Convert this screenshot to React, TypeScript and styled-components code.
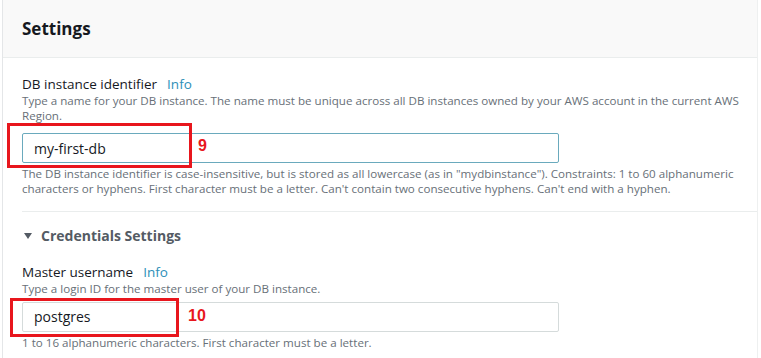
import styled, { createGlobalStyle } from "styled-components";

const GlobalStyle = createGlobalStyle`
    html, body {
        margin: 0;
        padding: 0;
        background: #ffffff;
        font-family: "Open Sans", "Liberation Sans", sans-serif;
        color: #16191f;
    }
`;

const Card = styled.div`
    margin-left: 2px;
    width: 756px;
    height: 358px;
    border-left: 1px solid #e4e6e8;
    border-right: 1px solid #eef0f0;
    box-sizing: border-box;
    overflow: hidden;
    background: #fff;
`;

const Header = styled.div`
    height: 58px;
    box-sizing: border-box;
    padding: 17px 19px 0;
    background: #f9f9f9;
    border-bottom: 1px solid #eaeded;
    font-size: 17px;
    font-weight: 700;
    color: #16191f;
`;

const Body = styled.div`
    padding: 16px 8px 0 19px;
    display: flex;
    flex-direction: column;
`;

const Field = styled.div<{ $top?: number }>`
    display: flex;
    flex-direction: column;
    margin-top: ${({ $top }) => $top ?? 0}px;
`;

const Label = styled.div`
    font-size: 13.5px;
    line-height: 20px;
    color: #16191f;
    display: flex;
    gap: 10px;
`;

const InfoLink = styled.span`
    color: #2d8fb8;
`;

const Help = styled.div<{ $top?: number }>`
    font-size: 11.6px;
    line-height: 14.5px;
    color: #687078;
    margin-top: ${({ $top }) => $top ?? 0}px;
`;

const InputWrap = styled.div<{ $top: number }>`
    position: relative;
    width: 537px;
    margin-top: ${({ $top }) => $top}px;
`;

const TextInput = styled.div<{ $focused?: boolean }>`
    height: 30px;
    box-sizing: border-box;
    border: 1px solid ${({ $focused }) => ($focused ? "#6aaabd" : "#d5dbdb")};
    border-radius: 2px;
    padding: 0 11px;
    display: flex;
    align-items: center;
    font-size: 14px;
    color: #16191f;
`;

const Marker = styled.div<{ $l: number; $t: number; $w: number; $h: number }>`
    position: absolute;
    left: ${({ $l }) => $l}px;
    top: ${({ $t }) => $t}px;
    width: ${({ $w }) => $w}px;
    height: ${({ $h }) => $h}px;
    border: 3px solid #e8161d;
    box-sizing: border-box;
`;

const StepNumber = styled.span<{ $l: number; $t: number }>`
    position: absolute;
    left: ${({ $l }) => $l}px;
    top: ${({ $t }) => $t}px;
    font-family: "Liberation Sans", Arial, sans-serif;
    font-weight: 700;
    font-size: 16px;
    line-height: 16px;
    color: #e8161d;
`;

const Divider = styled.div`
    height: 1px;
    background: #eaeded;
    margin: 15px -8px 0 0;
`;

const SectionToggle = styled.div`
    display: flex;
    align-items: center;
    gap: 9px;
    margin-top: 14px;
    font-size: 14px;
    font-weight: 700;
    color: #545b64;
    line-height: 20px;
`;

const Caret = styled.span`
    width: 0;
    height: 0;
    border-left: 4px solid transparent;
    border-right: 4px solid transparent;
    border-top: 6px solid #545b64;
    margin-left: 2px;
`;

export default function App() {
    return (
        <>
            <GlobalStyle />
            <Card>
                <Header>Settings</Header>
                <Body>
                    <Field>
                        <Label>DB instance identifier <InfoLink>Info</InfoLink></Label>
                        <Help>
                            Type a name for your DB instance. The name must be unique across all DB instances owned by your AWS account in the current AWS Region.
                        </Help>
                        <InputWrap $top={10}>
                            <TextInput $focused>my-first-db</TextInput>
                            <Marker $l={-15} $t={-10} $w={185} $h={45} />
                            <StepNumber $l={176} $t={5}>9</StepNumber>
                        </InputWrap>
                        <Help $top={4}>
                            The DB instance identifier is case-insensitive, but is stored as all lowercase (as in "mydbinstance"). Constraints: 1 to 60 alphanumeric characters or hyphens. First character must be a letter. Can't contain two consecutive hyphens. Can't end with a hyphen.
                        </Help>
                    </Field>
                    <Divider />
                    <SectionToggle><Caret />Credentials Settings</SectionToggle>
                    <Field $top={16}>
                        <Label>Master username <InfoLink>Info</InfoLink></Label>
                        <Help>Type a login ID for the master user of your DB instance.</Help>
                        <InputWrap $top={5}>
                            <TextInput>postgres</TextInput>
                            <Marker $l={-12} $t={-4} $w={169} $h={39} />
                            <StepNumber $l={166} $t={6}>10</StepNumber>
                        </InputWrap>
                        <Help $top={4}>1 to 16 alphanumeric characters. First character must be a letter.</Help>
                    </Field>
                </Body>
            </Card>
        </>
    );
}
